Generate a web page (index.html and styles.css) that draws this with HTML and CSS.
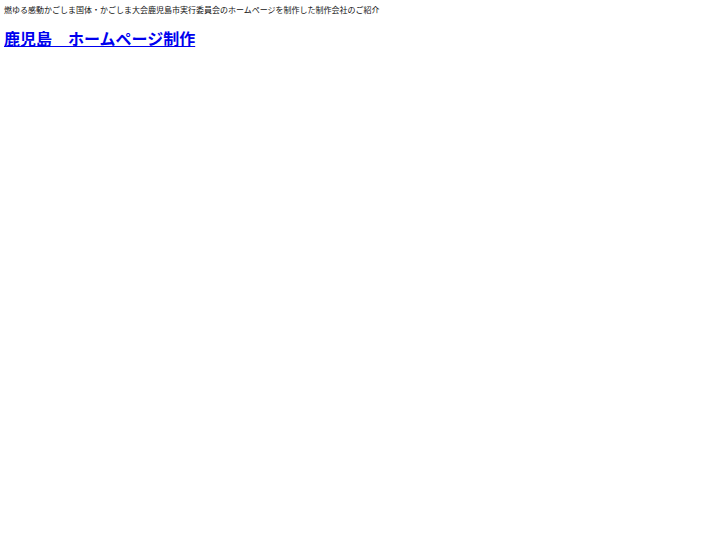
FILE: index.html
```html
<!DOCTYPE html>
<html lang="ja">
<head>
<meta charset="utf-8">
<title>鹿児島　ホームページ制作</title>
<link rel="stylesheet" href="styles.css">
</head>
<body>
<p class="lead">燃ゆる感動かごしま国体・かごしま大会鹿児島市実行委員会のホームページを制作した制作会社のご紹介</p>
<h1 class="title"><a href="#">鹿児島　ホームページ制作</a></h1>
</body>
</html>
```
FILE: styles.css
```css
html, body {
  margin: 0;
  background: #ffffff;
}
body {
  padding: 4px;
  font-family: "Noto Sans CJK JP", "Liberation Sans", sans-serif;
  color: #111111;
}
.lead {
  margin: 0;
  font-size: 8px;
  line-height: 12px;
}
.title {
  margin: 10px 0 0;
  font-size: 16px;
  line-height: 24px;
  font-weight: bold;
}
.title a {
  color: #0000ee;
  text-decoration: underline;
}
```
